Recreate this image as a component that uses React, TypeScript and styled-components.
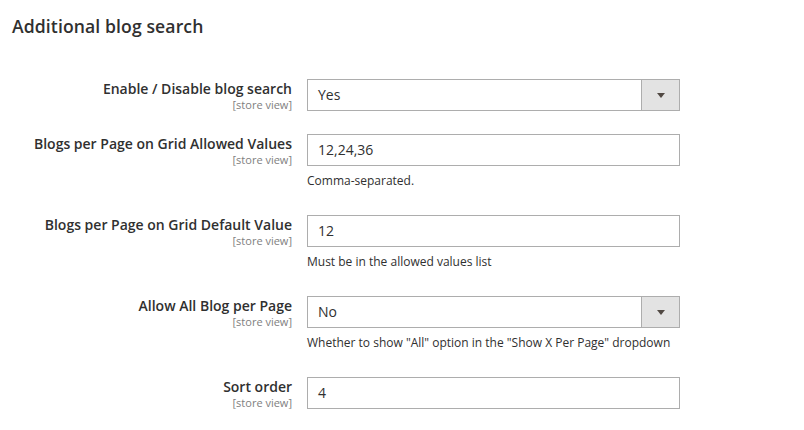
import React from 'react';
import styled, { createGlobalStyle } from 'styled-components';

const GlobalStyle = createGlobalStyle`
  html, body {
    margin: 0;
    padding: 0;
    background: #ffffff;
  }
  body {
    font-family: 'Open Sans', 'Liberation Sans', sans-serif;
    color: #303030;
  }
`;

const Section = styled.div`
  width: 804px;
  height: 430px;
  padding: 14px 0 0 12px;
  box-sizing: border-box;
  overflow: hidden;
`;

const Title = styled.h2`
  margin: 0 0 41px 0;
  font-size: 17.6px;
  line-height: 24px;
  font-weight: 600;
  color: #303030;
  letter-spacing: 0.1px;
`;

const Fields = styled.div`
  display: flex;
  flex-direction: column;
  gap: 23px;
`;

const Row = styled.div`
  display: grid;
  grid-template-columns: 280px 373px;
  column-gap: 15px;
`;

const LabelCol = styled.div`
  display: flex;
  flex-direction: column;
  align-items: flex-end;
  text-align: right;
`;

const Label = styled.label`
  font-size: 14px;
  line-height: 19px;
  font-weight: 600;
  color: #303030;
`;

const Scope = styled.span`
  font-size: 11px;
  line-height: 13px;
  color: #808080;
`;

const Control = styled.div`
  display: flex;
  flex-direction: column;
`;

const Box = styled.div`
  height: 32px;
  box-sizing: border-box;
  border: 1px solid #adadad;
  background: #ffffff;
  display: flex;
  align-items: stretch;
`;

const Value = styled.span`
  flex: 1;
  padding: 0 10px;
  font-size: 14px;
  line-height: 30px;
  color: #303030;
`;

const Toggle = styled.span`
  width: 37px;
  border-left: 1px solid #adadad;
  background: #e3e3e3;
  display: flex;
  align-items: center;
  justify-content: center;
`;

const Arrow = styled.span`
  width: 0;
  height: 0;
  border-left: 4px solid transparent;
  border-right: 4px solid transparent;
  border-top: 5px solid #514943;
  margin-top: 1px;
`;

const Note = styled.div`
  margin-top: 4px;
  font-size: 12px;
  line-height: 22px;
  color: #303030;
`;

type Field = {
  label: string;
  value: string;
  select?: boolean;
  note?: string;
};

const fields: Field[] = [
  { label: 'Enable / Disable blog search', value: 'Yes', select: true },
  { label: 'Blogs per Page on Grid Allowed Values', value: '12,24,36', note: 'Comma-separated.' },
  { label: 'Blogs per Page on Grid Default Value', value: '12', note: 'Must be in the allowed values list' },
  {
    label: 'Allow All Blog per Page',
    value: 'No',
    select: true,
    note: 'Whether to show "All" option in the "Show X Per Page" dropdown',
  },
  { label: 'Sort order', value: '4' },
];

export default function App(): JSX.Element {
  return (
    <Section>
      <GlobalStyle />
      <Title>Additional blog search</Title>
      <Fields>
        {fields.map((f) => (
          <Row key={f.label}>
            <LabelCol>
              <Label>{f.label}</Label>
              <Scope>[store view]</Scope>
            </LabelCol>
            <Control>
              <Box>
                <Value>{f.value}</Value>
                {f.select && (
                  <Toggle>
                    <Arrow />
                  </Toggle>
                )}
              </Box>
              {f.note && <Note>{f.note}</Note>}
            </Control>
          </Row>
        ))}
      </Fields>
    </Section>
  );
}
